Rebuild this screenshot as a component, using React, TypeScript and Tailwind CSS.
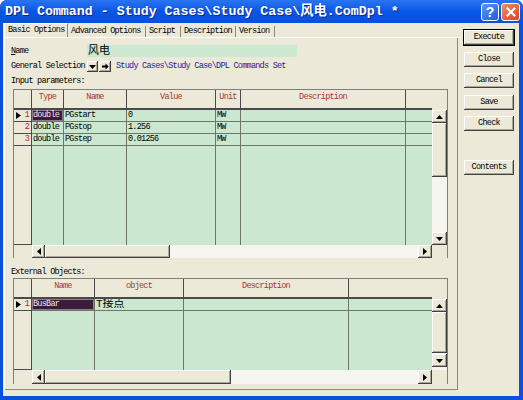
import React from "react";

const font = "font-['Liberation_Mono','Noto_Sans_CJK_SC',monospace]";
const small = "text-[8.5px] tracking-[-0.75px] leading-none";
const raised =
  "bg-[#ece9d8] shadow-[inset_-1px_-1px_0_#404040,inset_1px_1px_0_#ffffff,inset_-2px_-2px_0_#aca899]";

type Col = { label: string; w: number };
type Row = { cells: string[]; sel?: number };

function Arrow({ dir }: { dir: "up" | "down" | "left" | "right" }) {
  const vertical = dir === "up" || dir === "down";
  const pts = {
    up: "0,4 7,4 3.5,0",
    down: "0,0 7,0 3.5,4",
    left: "4,0 4,7 0,3.5",
    right: "0,0 0,7 4,3.5",
  }[dir];
  return (
    <svg width={vertical ? 7 : 4} height={vertical ? 4 : 7} viewBox={vertical ? "0 0 7 4" : "0 0 4 7"}>
      <polygon points={pts} fill="#000" />
    </svg>
  );
}

function ScrollBtn({ dir, className }: { dir: "up" | "down" | "left" | "right"; className: string }) {
  return (
    <div className={`${raised} flex items-center justify-center shrink-0 ${className}`}>
      <Arrow dir={dir} />
    </div>
  );
}

function Grid({
  cols,
  rows,
  bodyH,
  vThumb,
  vTrack,
  hThumb,
  hH,
}: {
  cols: Col[];
  rows: Row[];
  bodyH: string;
  vThumb: string;
  vTrack: string;
  hThumb: string;
  hH: string;
}) {
  return (
    <div className={`ml-[8px] w-[435px] flex flex-col border-l border-r border-t border-[#7f7f7f] ${small}`}>
      {/* header */}
      <div className="flex h-[20px] bg-[#ece9d8]">
        <div className="w-[18px] border-r border-b-2 border-[#4a4a4a]" />
        {cols.map((c, i) => (
          <div
            key={i}
            style={{ width: c.w }}
            className={`border-b-2 border-[#4a4a4a] text-center pt-[3px] text-[#a83636] ${
              i < cols.length - 1 ? "border-r" : ""
            }`}
          >
            {c.label}
          </div>
        ))}
        <div className="w-[15px]" />
      </div>

      {/* body */}
      <div className={`flex ${bodyH}`}>
        <div className="w-[18px] bg-[#ece9d8] border-r border-b border-[#4a4a4a] flex flex-col">
          {rows.map((_, i) => (
            <div key={i} className="h-[12px] border-b border-[#4a4a4a] flex items-center pl-[2px] pr-[2px]">
              {i === 0 && (
                <svg width="5" height="7" viewBox="0 0 5 7">
                  <polygon points="0,0 5,3.5 0,7" fill="#000" />
                </svg>
              )}
              <span className="ml-auto text-[#c81e1e]">{i + 1}</span>
            </div>
          ))}
        </div>
        <div className="flex-1 flex flex-col bg-[#cbe7cf] text-black">
          {rows.map((r, ri) => (
            <div key={ri} className="flex h-[12px] border-b border-[#6a786a]">
              {cols.map((c, ci) => (
                <div
                  key={ci}
                  style={{ width: c.w }}
                  className={`flex items-center pl-[1px] whitespace-nowrap overflow-hidden ${
                    ci < cols.length - 1 ? "border-r border-[#6a786a]" : ""
                  } ${r.sel === ci ? "bg-[#3b1d3b] text-[#f0e2f0] shadow-[inset_0_0_0_1px_#8c7a8c]" : ""}`}
                >
                  <span className={/[\u4e00-\u9fff]/.test(r.cells[ci] ?? "") ? "text-[11px] tracking-normal" : ""}>
                    {r.cells[ci]}
                  </span>
                </div>
              ))}
            </div>
          ))}
          <div className="flex-1 flex">
            {cols.map((c, ci) => (
              <div
                key={ci}
                style={{ width: c.w }}
                className={ci < cols.length - 1 ? "border-r border-[#6a786a]" : ""}
              />
            ))}
          </div>
        </div>
        <div className="w-[15px] flex flex-col bg-[#f6f5f0]">
          <ScrollBtn dir="up" className="h-[13px]" />
          <div className={`${raised} ${vThumb}`} />
          <div className={vTrack} />
          <ScrollBtn dir="down" className="h-[13px]" />
          <div className="flex-1" />
        </div>
      </div>

      {/* horizontal scroll */}
      <div className={`flex ${hH} bg-[#ece9d8]`}>
        <div className="w-[18px]" />
        <div className="w-[400px] flex bg-[#f6f5f0]">
          <ScrollBtn dir="left" className="w-[13px]" />
          <div className={`${raised} ${hThumb}`} />
          <div className="flex-1" />
          <ScrollBtn dir="right" className="w-[14px]" />
        </div>
        <div className="w-[15px]" />
      </div>
    </div>
  );
}

function Btn({ label, className, def }: { label: string; className: string; def?: boolean }) {
  return (
    <div
      className={`h-[15px] w-[50px] flex items-center justify-center ${raised} ${small} text-black ${
        def ? "outline outline-1 outline-black" : ""
      } ${className}`}
    >
      {label}
    </div>
  );
}

const tabs = [
  { label: "Basic Options", w: "w-[64px]" },
  { label: "Advanced Options", w: "w-[78px]" },
  { label: "Script", w: "w-[35px]" },
  { label: "Description", w: "w-[55px]" },
  { label: "Version", w: "w-[39px]" },
];

export default function App() {
  return (
    <div className={`w-[523px] h-[400px] flex flex-col bg-[#0b50da] rounded-t-[7px] overflow-hidden ${font}`}>
      {/* title bar */}
      <div className="h-[23px] shrink-0 flex items-center bg-linear-to-b from-[#2a74f2] via-[#0657e6] to-[#0a50d8] pl-[5px] pr-[3px]">
        <span className="text-white font-bold text-[13.3px] leading-none whitespace-nowrap [text-shadow:1px_1px_0_#0a2a90]">
          {"DPL Command - Study Cases\\Study Case\\风电.ComDpl *"}
        </span>
        <div className="ml-auto flex gap-[2px]">
          <div className="w-[18px] h-[18px] rounded-[3px] border border-white bg-linear-to-br from-[#5a95f8] to-[#1c5ee0] flex items-center justify-center text-white font-bold text-[14px] leading-none font-['Liberation_Sans',sans-serif]">
            ?
          </div>
          <div className="w-[19px] h-[18px] rounded-[3px] border border-white bg-linear-to-br from-[#f08a66] to-[#d8431c] flex items-center justify-center">
            <svg width="10" height="10" viewBox="0 0 10 10">
              <path d="M1.5 1.5 L8.5 8.5 M8.5 1.5 L1.5 8.5" stroke="#fff" strokeWidth="2" strokeLinecap="square" />
            </svg>
          </div>
        </div>
      </div>

      {/* body */}
      <div className="flex-1 ml-[3px] mr-[4px] mb-[4px] bg-[#ece9d8] flex">
        <div className="w-[455px] pl-[1px] pb-[6px] flex flex-col">
          {/* tabs */}
          <div className={`h-[14px] shrink-0 flex items-end ${small} text-black`}>
            {tabs.map((t, i) => (
              <div
                key={t.label}
                className={`${t.w} flex items-center pl-[3px] border-r border-[#8c8a7e] whitespace-nowrap ${
                  i === 0 ? "h-[14px] border-l border-t border-l-white border-t-white" : "h-[11px]"
                }`}
              >
                {t.label}
              </div>
            ))}
          </div>

          {/* panel */}
          <div className={`flex-1 flex flex-col border-t border-l border-white shadow-[inset_-1px_-1px_0_#8c8a7e] ${small} text-black`}>
            <div className="mt-[7px] h-[12px] flex items-center pl-[6px]">
              <span className="w-[76px]">
                <span className="underline">N</span>ame
              </span>
              <div className="w-[210px] h-[12px] bg-[#cce8d1] flex items-center pl-[1px] text-[11px] tracking-normal">
                风电
              </div>
            </div>

            <div className="mt-[4px] h-[11px] flex items-center pl-[6px]">
              <span className="w-[76px] whitespace-nowrap">General Selection</span>
              <div className={`${raised} w-[11px] h-[11px] flex items-center justify-center`}>
                <Arrow dir="down" />
              </div>
              <div className={`${raised} ml-[1px] w-[12px] h-[11px] flex items-center justify-center`}>
                <svg width="7" height="7" viewBox="0 0 7 7">
                  <path d="M0 2.5 H3.5 V0.5 L6.8 3.5 L3.5 6.5 V4.5 H0 Z" fill="#000" />
                </svg>
              </div>
              <span className="ml-[5px] text-[#1c1ca6] whitespace-nowrap">
                {"Study Cases\\Study Case\\DPL Commands Set"}
              </span>
            </div>

            <div className="mt-[5px] h-[9px] pl-[6px] flex items-center">Input parameters:</div>

            <div className="mt-[3px]">
              <Grid
                cols={[
                  { label: "Type", w: 32 },
                  { label: "Name", w: 63 },
                  { label: "Value", w: 89 },
                  { label: "Unit", w: 25 },
                  { label: "Description", w: 165 },
                  { label: "", w: 26 },
                ]}
                rows={[
                  { cells: ["double", "PGstart", "0", "MW"], sel: 0 },
                  { cells: ["double", "PGstop", "1.256", "MW"] },
                  { cells: ["double", "PGstep", "0.01256", "MW"] },
                ]}
                bodyH="h-[135px]"
                vThumb="h-[54px]"
                vTrack="h-[55px]"
                hThumb="w-[125px]"
                hH="h-[13px]"
              />
            </div>

            <div className="mt-[9px] h-[10px] pl-[6px] flex items-center">External Objects:</div>

            <div className="mt-[1px]">
              <Grid
                cols={[
                  { label: "Name", w: 63 },
                  { label: "object", w: 89 },
                  { label: "Description", w: 165 },
                  { label: "", w: 83 },
                ]}
                rows={[{ cells: ["BusBar", "T接点"], sel: 0 }]}
                bodyH="h-[71px]"
                vThumb="h-[41px]"
                vTrack="h-[1px]"
                hThumb="w-[186px]"
                hH="h-[14px]"
              />
            </div>
          </div>
        </div>

        {/* buttons */}
        <div className="ml-[6px] w-[50px] flex flex-col pt-[7px]">
          <Btn label="Execute" className="" def />
          <Btn label="Close" className="mt-[7px]" />
          <Btn label="Cancel" className="mt-[6px]" />
          <Btn label="Save" className="mt-[7px]" />
          <Btn label="Check" className="mt-[6px]" />
          <Btn label="Contents" className="mt-[29px]" />
        </div>
      </div>
    </div>
  );
}
